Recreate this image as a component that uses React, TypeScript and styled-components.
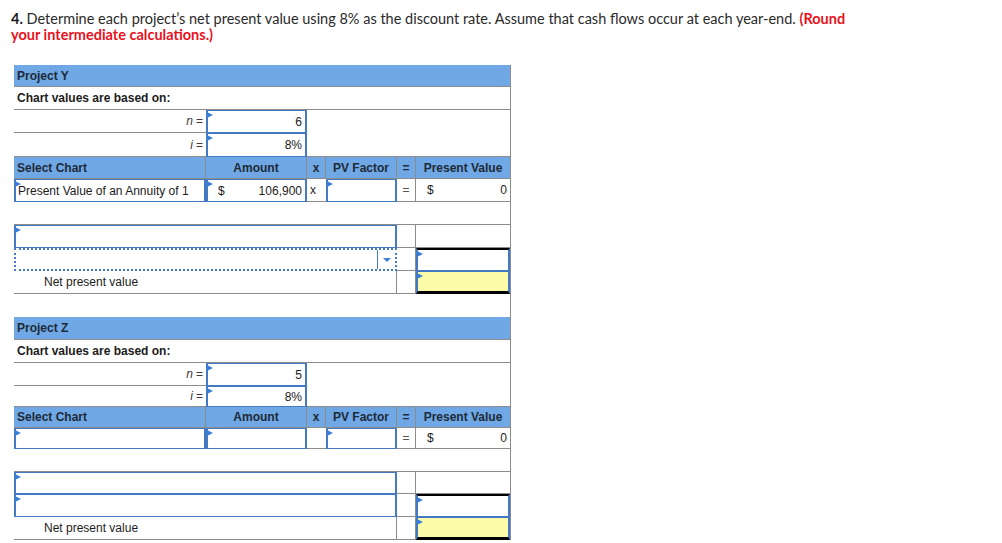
import React from 'react';
import styled, { createGlobalStyle } from 'styled-components';

const LINE = '#8c8c8c';
const HEAD = '#6fa8e4';
const FIELD = '#4479c4';
const MARK = '#3b7ed8';
const YELLOW = '#fcfca8';

const GlobalStyle = createGlobalStyle`
  html, body { margin: 0; padding: 0; background: #fff; }
  body { font-family: "Liberation Sans", Arial, sans-serif; color: #1c1c1c; }
`;

const Page = styled.div`
  padding: 11px 0 0 11px;
`;

const Question = styled.p`
  margin: 0 0 22px 0;
  width: 840px;
  font-family: Lato, "Liberation Sans", sans-serif;
  font-size: 14.5px;
  line-height: 16px;
  color: #2a2a2a;

  b { font-weight: 700; color: #1a1a1a; }
  strong { font-weight: 700; color: #e8121c; }
`;

const Sheet = styled.div`
  margin-left: 3px;
  font-size: 12px;
`;

const Grid = styled.div<{ $rows: string }>`
  display: grid;
  grid-template-columns: 192px 101px 19px 71px 19px 94px;
  grid-template-rows: ${({ $rows }) => $rows};
  width: 497px;
  box-sizing: border-box;
  border-right: 1px solid ${LINE};
`;

const Spacer = styled.div`
  width: 497px;
  height: 23px;
  box-sizing: border-box;
  border-right: 1px solid ${LINE};
`;

type Align = 'left' | 'center' | 'right';
const justify = (a?: Align) => (a === 'right' ? 'flex-end' : a === 'center' ? 'center' : 'flex-start');

type CellProps = {
  $span?: number;
  $bb?: boolean;
  $br?: boolean;
  $head?: boolean;
  $bold?: boolean;
  $align?: Align;
  $pl?: number;
};

const Cell = styled.div<CellProps>`
  grid-column: span ${({ $span }) => $span ?? 1};
  display: flex;
  align-items: center;
  justify-content: ${({ $align }) => justify($align)};
  box-sizing: border-box;
  min-width: 0;
  padding: 0 3px 0 ${({ $pl }) => $pl ?? 3}px;
  background: ${({ $head }) => ($head ? HEAD : 'transparent')};
  font-weight: ${({ $bold, $head }) => ($bold || $head ? 700 : 400)};
  color: ${({ $head }) => ($head ? '#1e2a38' : '#1c1c1c')};
  border-bottom: ${({ $bb }) => ($bb ? `1px solid ${LINE}` : 'none')};
  border-right: ${({ $br }) => ($br ? `1px solid ${LINE}` : 'none')};
  white-space: nowrap;
`;

const Label = styled(Cell)`
  color: #3a3a3a;
  i { font-style: italic; margin-right: 3px; }
`;

const Sign = styled(Cell)`
  color: #555;
`;

type FieldProps = {
  $span?: number;
  $align?: Align;
  $bg?: string;
  $top?: string;
  $bottom?: string;
  $marker?: boolean;
  $dotted?: boolean;
};

const Field = styled.div<FieldProps>`
  grid-column: span ${({ $span }) => $span ?? 1};
  position: relative;
  display: flex;
  align-items: center;
  justify-content: ${({ $align }) => justify($align)};
  gap: 6px;
  box-sizing: border-box;
  min-width: 0;
  padding: 0 3px 0 2px;
  background: ${({ $bg }) => $bg ?? '#fff'};
  border: 2px ${({ $dotted }) => ($dotted ? 'dotted' : 'solid')} ${FIELD};
  border-top: ${({ $top }) => $top ?? `1px solid ${FIELD}`};
  border-bottom: ${({ $bottom }) => $bottom ?? `1px solid ${FIELD}`};
  white-space: nowrap;

  &::before {
    content: '';
    display: ${({ $marker }) => ($marker ? 'block' : 'none')};
    position: absolute;
    left: -1px;
    top: 1px;
    border-left: 6px solid ${MARK};
    border-top: 3px solid transparent;
    border-bottom: 3px solid transparent;
  }
`;

const Money = styled.span`
  flex: 1;
  text-align: right;
`;

const Dollar = styled.span`
  padding-left: 8px;
`;

const Caret = styled.div`
  margin-left: auto;
  align-self: stretch;
  width: 17px;
  display: flex;
  align-items: center;
  justify-content: center;
  border-left: 1px solid ${FIELD};
  margin-right: -3px;

  &::after {
    content: '';
    border-top: 4px solid ${MARK};
    border-left: 4px solid transparent;
    border-right: 4px solid transparent;
  }
`;

const RateRows: React.FC<{ n: string }> = ({ n }) => (
  <>
    <Label $bb $align="right"><i>n</i>=</Label>
    <Field $marker $align="right">{n}</Field>
    <Cell $span={4} />
    <Label $bb $align="right"><i>i</i>=</Label>
    <Field $marker $align="right">8%</Field>
    <Cell $span={4} $bb />
  </>
);

const ChartHeader: React.FC = () => (
  <>
    <Cell $head $bb $br>Select Chart</Cell>
    <Cell $head $bb $br $align="center">Amount</Cell>
    <Cell $head $bb $br $align="center">x</Cell>
    <Cell $head $bb $br $align="center">PV Factor</Cell>
    <Cell $head $bb $br $align="center">=</Cell>
    <Cell $head $bb $align="center">Present Value</Cell>
  </>
);

const NpvRow: React.FC = () => (
  <>
    <Cell $span={4} $bb $br $pl={30}>Net present value</Cell>
    <Cell $bb $br />
    <Field $marker $bg={YELLOW} $bottom="3px solid #000" />
  </>
);

const App: React.FC = () => (
  <Page>
    <GlobalStyle />
    <Question>
      <b>4.</b> Determine each project’s net present value using 8% as the discount rate. Assume that cash flows occur at each year-end.{' '}
      <strong>(Round your intermediate calculations.)</strong>
    </Question>

    <Sheet>
      <Grid $rows="22px 23px 23px 24px 22px 23px 23px 23px 23px 23px">
        <Cell $span={6} $head $bb>Project Y</Cell>
        <Cell $span={6} $bold $bb>Chart values are based on:</Cell>
        <RateRows n="6" />
        <ChartHeader />

        <Field $marker>Present Value of an Annuity of 1</Field>
        <Field $marker><Dollar>$</Dollar><Money>106,900</Money></Field>
        <Cell $bb>x</Cell>
        <Field $marker />
        <Sign $bb $br $align="center">=</Sign>
        <Cell $bb><Dollar>$</Dollar><Money>0</Money></Cell>

        <Cell $span={6} $bb />

        <Field $span={4} $marker />
        <Cell $bb $br />
        <Cell $bb />

        <Field $span={4} $dotted $top={`2px dotted ${FIELD}`} $bottom={`2px dotted ${FIELD}`}>
          <Caret />
        </Field>
        <Cell $bb $br />
        <Field $marker $top="2px solid #000" />

        <NpvRow />
      </Grid>

      <Spacer />

      <Grid $rows="23px 23px 23px 21px 21px 21px 23px 22px 23px 23px">
        <Cell $span={6} $head $bb>Project Z</Cell>
        <Cell $span={6} $bold $bb>Chart values are based on:</Cell>
        <RateRows n="5" />
        <ChartHeader />

        <Field $marker />
        <Field $marker />
        <Cell $bb />
        <Field $marker />
        <Sign $bb $br $align="center">=</Sign>
        <Cell $bb><Dollar>$</Dollar><Money>0</Money></Cell>

        <Cell $span={6} $bb />

        <Field $span={4} $marker />
        <Cell $bb $br />
        <Cell $bb />

        <Field $span={4} $marker />
        <Cell $bb $br />
        <Field $marker $top="2px solid #000" />

        <NpvRow />
      </Grid>
    </Sheet>
  </Page>
);

export default App;
